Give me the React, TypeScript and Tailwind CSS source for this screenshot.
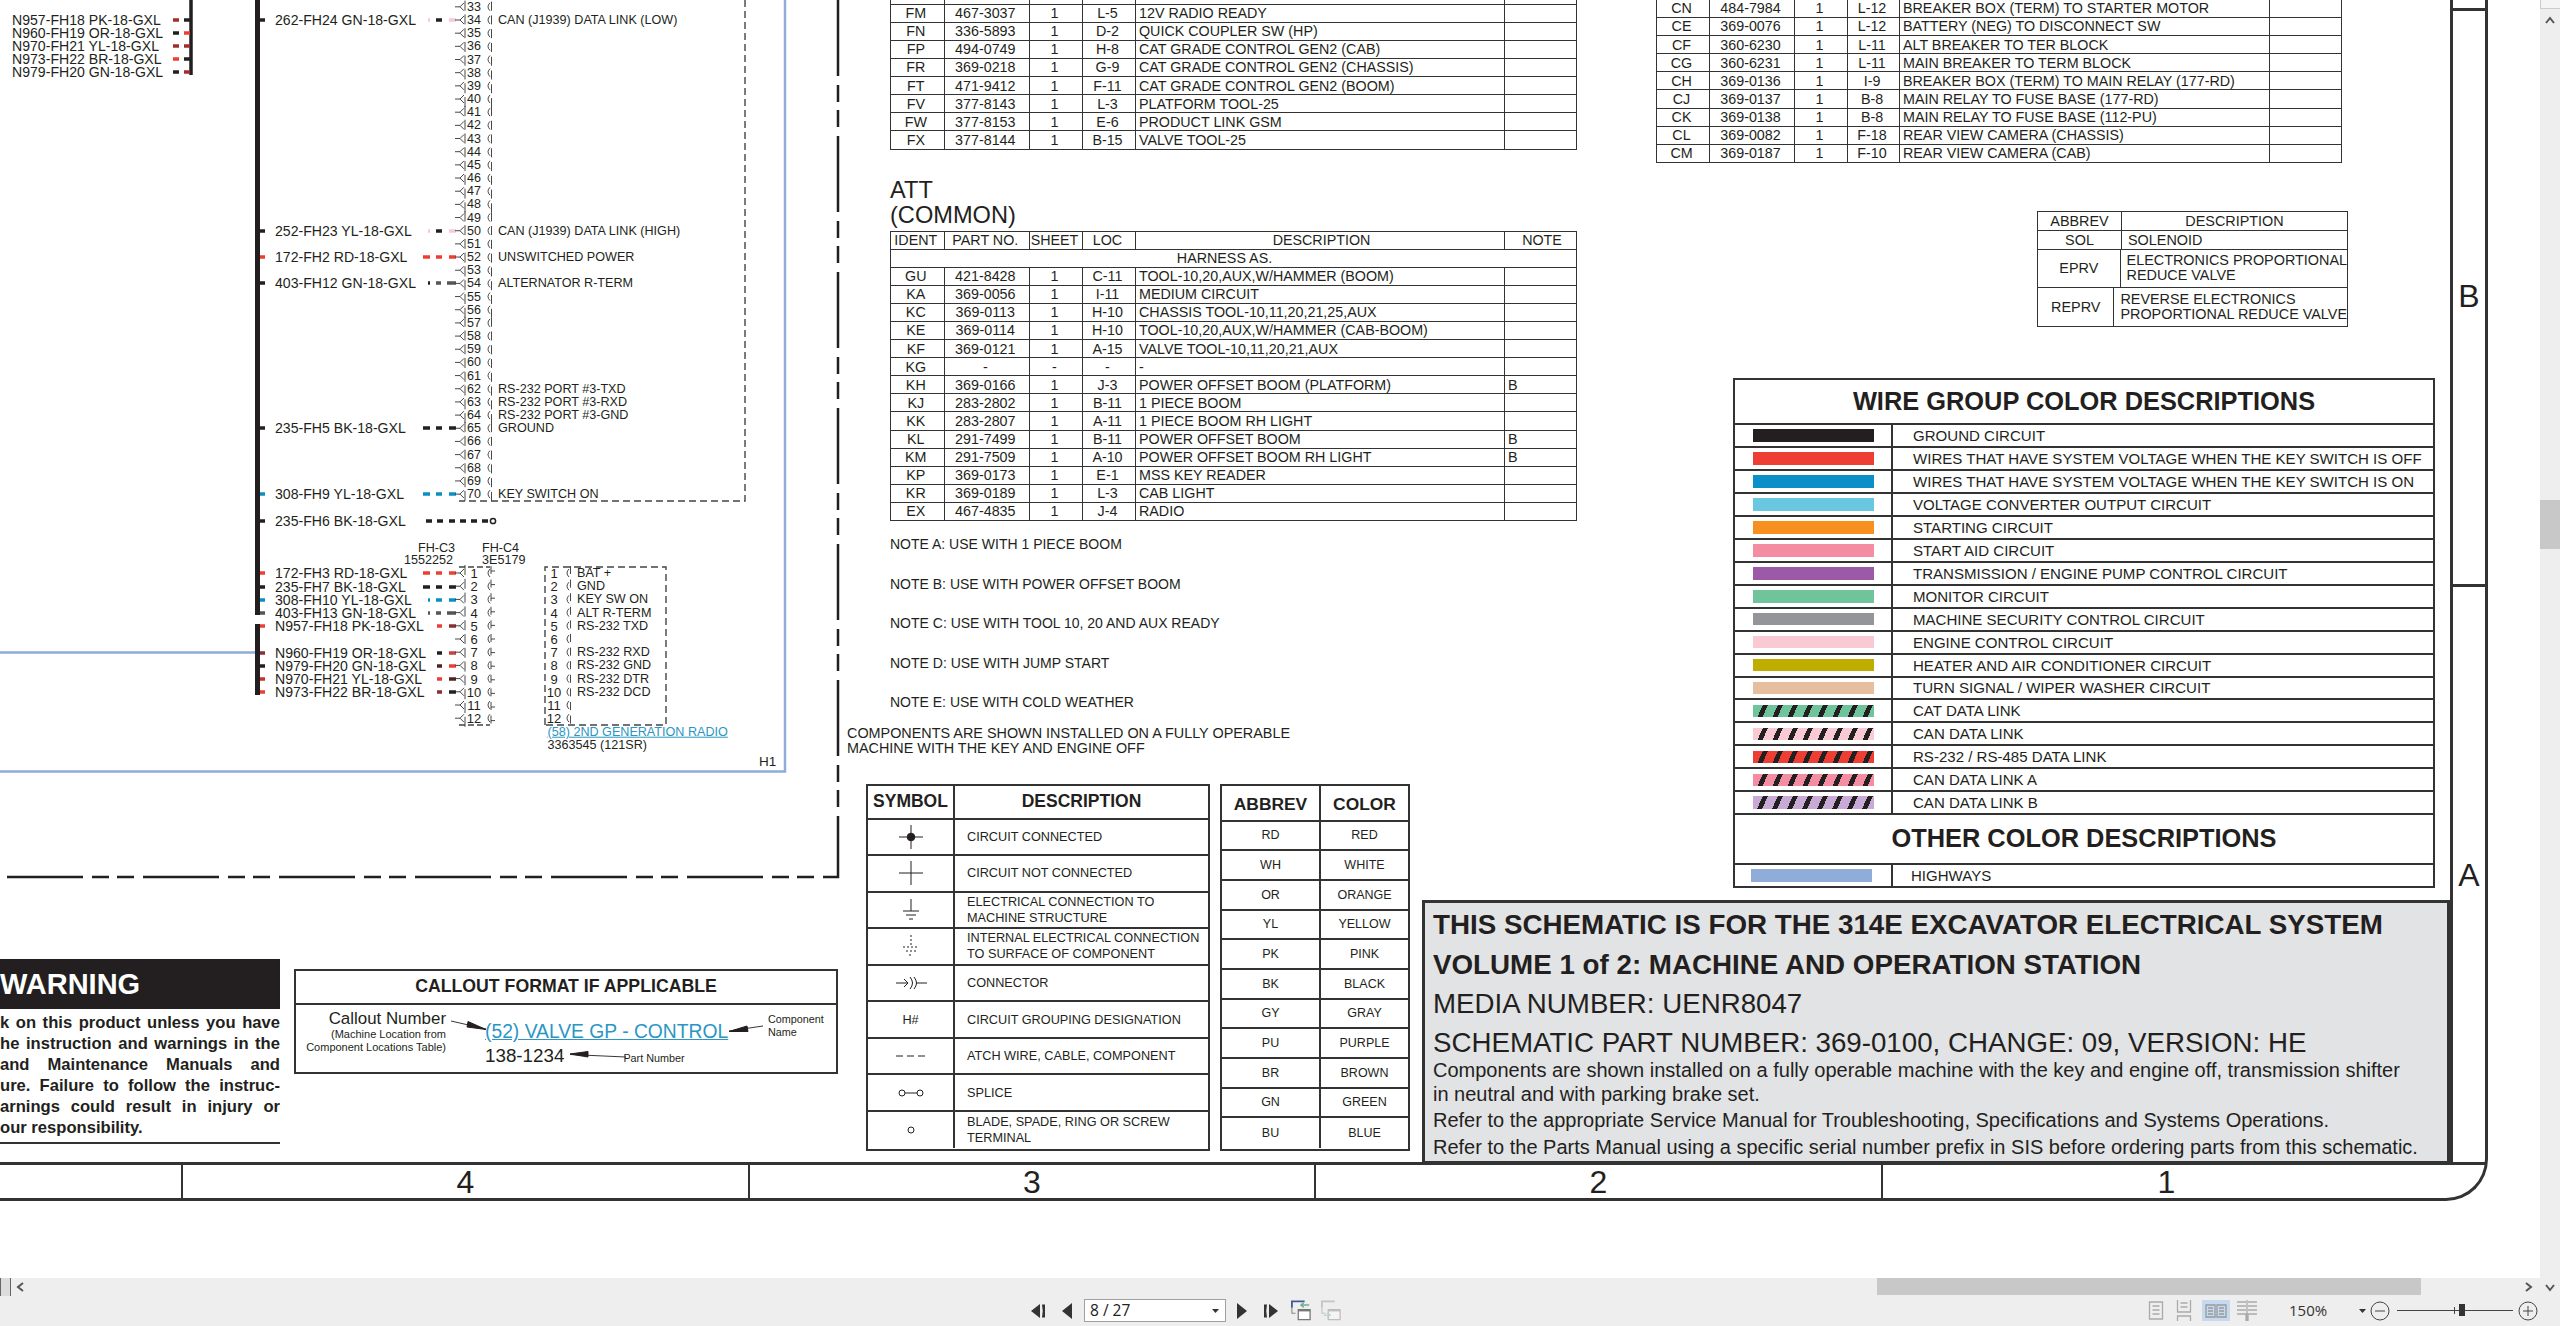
import React from "react";

const INK = "#231f20";
const RED = "#ee3e33";
const BLK = "#231f20";
const BLU = "#0a8fc4";
const PNK = "#f6c9d6";

type Dash = [number, number, string];
type Wire = { label: string; y: number; stub?: string; dashes: Dash[] };

const threeDash = (c: string): Dash[] => [[423, 430, c], [436, 442, c], [449, 456, c]];

const wires: Wire[] = [
  { label: "262-FH24 GN-18-GXL", y: 20, stub: BLK, dashes: [[428, 430, PNK], [436, 442, BLK], [449, 456, PNK]] },
  { label: "252-FH23 YL-18-GXL", y: 231, stub: BLK, dashes: [[428, 430, PNK], [436, 442, BLK], [449, 456, PNK]] },
  { label: "172-FH2 RD-18-GXL", y: 257, stub: RED, dashes: threeDash(RED) },
  { label: "403-FH12 GN-18-GXL", y: 283, stub: BLK, dashes: [[428, 430, BLK], [436, 441, "#555"], [447, 456, "#555"]] },
  { label: "235-FH5 BK-18-GXL", y: 428, stub: BLK, dashes: threeDash(BLK) },
  { label: "308-FH9 YL-18-GXL", y: 494, stub: BLU, dashes: threeDash(BLU) },
  { label: "235-FH6 BK-18-GXL", y: 521, stub: BLK, dashes: [[426, 432, BLK], [437, 443, BLK], [449, 455, BLK], [460, 466, BLK], [471, 477, BLK], [482, 488, BLK]] },
  { label: "172-FH3 RD-18-GXL", y: 573, stub: RED, dashes: threeDash(RED) },
  { label: "235-FH7 BK-18-GXL", y: 587, stub: BLK, dashes: threeDash(BLK) },
  { label: "308-FH10 YL-18-GXL", y: 600, stub: BLU, dashes: [[428, 430, BLU], [436, 442, BLU], [449, 456, BLU]] },
  { label: "403-FH13 GN-18-GXL", y: 613, stub: "#555", dashes: [[428, 430, "#555"], [436, 441, "#555"], [447, 456, "#555"]] },
  { label: "N957-FH18 PK-18-GXL", y: 626, stub: RED, dashes: [[437, 442, RED], [449, 456, "#8a3030"]] },
  { label: "N960-FH19 OR-18-GXL", y: 653, stub: "#8a3030", dashes: [[437, 442, BLK], [449, 456, "#c84040"]] },
  { label: "N979-FH20 GN-18-GXL", y: 666, stub: BLK, dashes: [[437, 442, "#552020"], [449, 456, RED]] },
  { label: "N970-FH21 YL-18-GXL", y: 679, stub: "#c83030", dashes: [[437, 442, RED], [449, 456, "#552020"]] },
  { label: "N973-FH22 BR-18-GXL", y: 692, stub: RED, dashes: [[437, 442, "#8a3030"], [449, 456, BLK]] },
];

const leftWires: { label: string; y: number; a: string; b: string }[] = [
  { label: "N957-FH18 PK-18-GXL", y: 20, a: "#a02c2c", b: BLK },
  { label: "N960-FH19 OR-18-GXL", y: 33, a: BLK, b: RED },
  { label: "N970-FH21 YL-18-GXL", y: 46, a: "#a02c2c", b: "#a02c2c" },
  { label: "N973-FH22 BR-18-GXL", y: 59, a: RED, b: BLK },
  { label: "N979-FH20 GN-18-GXL", y: 72, a: BLK, b: "#a02c2c" },
];

const pinY = (n: number) => 20 + (n - 34) * 13.17;
const pins = Array.from({ length: 38 }, (_, i) => i + 33);
const pinLabels: Record<number, string> = {
  34: "CAN (J1939) DATA LINK (LOW)",
  50: "CAN (J1939) DATA LINK (HIGH)",
  52: "UNSWITCHED POWER",
  54: "ALTERNATOR R-TERM",
  62: "RS-232 PORT #3-TXD",
  63: "RS-232 PORT #3-RXD",
  64: "RS-232 PORT #3-GND",
  65: "GROUND",
  70: "KEY SWITCH ON",
};

const c3Y = (n: number) => 573 + (n - 1) * 13.2;
const c3 = Array.from({ length: 12 }, (_, i) => i + 1);
const radioLabels = ["BAT +", "GND", "KEY SW ON", "ALT R-TERM", "RS-232 TXD", "", "RS-232 RXD", "RS-232 GND", "RS-232 DTR", "RS-232 DCD", "", ""];

function Tag({ x, y, className, children }: { x: number; y: number; className?: string; children: React.ReactNode }) {
  return (
    <div className={"absolute -translate-y-1/2 whitespace-nowrap leading-none " + (className ?? "text-[12.6px]")} style={{ left: x, top: y }}>
      {children}
    </div>
  );
}

function Diagram() {
  return (
    <div className="relative h-[959px] w-[847px] shrink-0">
      <svg className="absolute left-0 top-0" width="847" height="959" fill="none">
        <path d="M785 0V771.5H0" stroke="#8fadd8" strokeWidth="2.5" />
        <path d="M0 652.5H256" stroke="#8fadd8" strokeWidth="2.5" />
        <path d="M838 0V877H0" stroke="#231f20" strokeWidth="2.5" strokeDasharray="76 9 17 8 17 9" />
        <path d="M191 0V75" stroke={BLK} strokeWidth="3.5" />
        <path d="M257.5 0V615M257.5 624V695" stroke={BLK} strokeWidth="5" />
        <path d="M745 0V501H459" stroke="#444" strokeWidth="1.4" strokeDasharray="7 4" />
        <path d="M459 567H490M459 725H490" stroke="#444" strokeWidth="1.4" strokeDasharray="6 3" />
        <path d="M545 725V567H666V725H545" stroke="#444" strokeWidth="1.4" strokeDasharray="7 4" />
        {leftWires.map((w) => (
          <g key={w.label} strokeWidth="3.5">
            <path d={`M173 ${w.y}H179`} stroke={w.a} />
            <path d={`M184 ${w.y}H190`} stroke={w.b} />
          </g>
        ))}
        {wires.map((w) => (
          <g key={w.label} strokeWidth="3.5">
            <path d={`M260 ${w.y}H265`} stroke={w.stub} />
            {w.dashes.map((d, i) => (
              <path key={i} d={`M${d[0]} ${w.y}H${d[1]}`} stroke={d[2]} />
            ))}
          </g>
        ))}
        <circle cx="493" cy="521" r="2.6" stroke={BLK} strokeWidth="1.5" />
        {pins.map((n) => {
          const y = pinY(n);
          const o = ((n - 33) % 8) - 2;
          return (
            <g key={n} stroke="#333" strokeWidth="0.9">
              <path d={`M455 ${y}H460M464 ${y - 4}L460 ${y}L464 ${y + 4}M465 ${y - 5 + o * 0.6}V${y + 5 + o * 0.6}`} />
              <path d={`M490 ${y - 4}Q486 ${y} 490 ${y + 4}M491.5 ${y - 4 + o * 0.6}V${y + 5 + o * 0.6}`} />
            </g>
          );
        })}
        {c3.map((n) => {
          const y = c3Y(n);
          const o = n - 6;
          return (
            <g key={n} stroke="#333" strokeWidth="0.9">
              <path d={`M455 ${y}H460M464 ${y - 4}L460 ${y}L464 ${y + 4}M465 ${y - 5 + o * 0.6}V${y + 5 + o * 0.6}`} />
              <path d={`M490 ${y - 4}Q486 ${y} 490 ${y + 4}M491 ${y + o * 0.4 - 5}V${y + o * 0.4 + 3}M491 ${y + o * 0.4}H495`} />
              <path d={`M569 ${y - 4}Q565 ${y} 569 ${y + 4}M570.5 ${y - 5 + o * 0.4}V${y + 3 + o * 0.4}`} />
            </g>
          );
        })}
      </svg>

      {leftWires.map((w) => (
        <Tag key={w.label} x={12} y={w.y} className="text-[14.1px]">{w.label}</Tag>
      ))}
      {wires.map((w) => (
        <Tag key={w.label} x={275} y={w.y} className="text-[14.1px]">{w.label}</Tag>
      ))}
      {pins.map((n) => (
        <Tag key={n} x={467} y={pinY(n)} className="text-[12.5px]">{n}</Tag>
      ))}
      {pins.filter((n) => pinLabels[n]).map((n) => (
        <Tag key={n} x={498} y={pinY(n)}>{pinLabels[n]}</Tag>
      ))}
      <Tag x={418} y={548}>FH-C3</Tag>
      <Tag x={404} y={560}>1552252</Tag>
      <Tag x={482} y={548}>FH-C4</Tag>
      <Tag x={482} y={560}>3E5179</Tag>
      {c3.map((n) => (
        <React.Fragment key={n}>
          <div className="absolute w-[20px] -translate-y-1/2 text-center text-[13px] leading-none" style={{ left: 464, top: c3Y(n) }}>{n}</div>
          <div className="absolute w-[20px] -translate-y-1/2 text-center text-[13px] leading-none" style={{ left: 544, top: c3Y(n) }}>{n}</div>
          {radioLabels[n - 1] && <Tag x={577} y={c3Y(n)}>{radioLabels[n - 1]}</Tag>}
        </React.Fragment>
      ))}
      <Tag x={547.5} y={732} className="text-[12.6px] text-[#2a96c4] underline">(58) 2ND GENERATION RADIO</Tag>
      <Tag x={547.5} y={745}>3363545 (121SR)</Tag>
      <Tag x={759} y={762} className="text-[13.5px]">H1</Tag>
    </div>
  );
}

function Warning() {
  const lines = [
    "k on this product unless you have",
    "he instruction and warnings in the",
    "and Maintenance Manuals and",
    "ure. Failure to follow the instruc-",
    "arnings could result in injury or",
  ];
  return (
    <div className="h-[185px] w-[280px] shrink-0 overflow-hidden border-b-[2.5px] border-[#333]">
      <div className="flex h-[50px] items-center bg-[#231f20] text-[29px] font-bold leading-none text-white">WARNING</div>
      <div className="pt-[3px]">
        {lines.map((l) => (
          <div key={l} className="h-[21px] text-[16.6px] font-bold leading-[21px] [text-align-last:justify]">{l}</div>
        ))}
        <div className="h-[21px] text-[16.6px] font-bold leading-[21px]">our responsibility.</div>
      </div>
    </div>
  );
}

function Callout() {
  return (
    <div className="ml-[14px] mt-[10px] h-[105px] w-[544px] shrink-0 border-2 border-[#333]">
      <div className="flex h-[34px] items-center justify-center border-b-2 border-[#333] text-[17.7px] font-bold leading-none">CALLOUT FORMAT IF APPLICABLE</div>
      <div className="relative flex">
        <div className="w-[150px] shrink-0 pt-[5px] text-right">
          <div className="text-[16.9px] leading-[18px]">Callout Number</div>
          <div className="text-[11px] leading-[13px]">(Machine Location from</div>
          <div className="text-[11px] leading-[13px]">Component Locations Table)</div>
        </div>
        <div className="ml-[39px] w-[283px] shrink-0 pt-[16px]">
          <div className="text-[19.3px] leading-[22px] text-[#2a96c4] underline">(52) VALVE GP - CONTROL</div>
          <div className="mt-[1px] flex items-center">
            <span className="text-[18.8px] leading-[24px]">138-1234</span>
            <span className="ml-[59px] mt-[4px] text-[10.8px] leading-none">Part Number</span>
          </div>
        </div>
        <div className="pt-[8px] text-[10.8px] leading-[13px]">
          <div>Component</div>
          <div>Name</div>
        </div>
        <svg className="absolute left-0 top-0" width="540" height="68" fill={INK} stroke={INK}>
          <path d="M155 16L190 24" strokeWidth="0.9" />
          <path d="M190 24.5L172 16.5L171 22Z" />
          <path d="M467 21L433 26" strokeWidth="0.9" />
          <path d="M433 26.5L451 21L452 26.5Z" />
          <path d="M330 52L274 49.5" strokeWidth="0.9" />
          <path d="M274 49L292 46.5L292 52Z" />
        </svg>
      </div>
    </div>
  );
}

const midGrid = "grid-cols-[53.6px_85.4px_53px_53px_369px_1fr]";
const rightGrid = "grid-cols-[53px_85px_53px_52px_370px_1fr]";

function PartRow({ cells, grid, extra }: { cells: string[]; grid: string; extra?: string }) {
  return (
    <div className={"grid h-[18.1px] border-x-[1.5px] border-b-[1.5px] border-[#333] text-[14.3px] leading-none " + grid + " " + (extra ?? "")}>
      {cells.map((c, i) => (
        <div
          key={i}
          className={
            "flex items-center whitespace-nowrap " +
            (i < 5 ? "border-r-[1.5px] border-[#333] " : "") +
            (i < 4 ? "justify-center pr-[3px]" : "pl-[3px]")
          }
        >
          {c}
        </div>
      ))}
    </div>
  );
}

const topMid = [
  ["FL", "369-0201", "1", "G-10", "OVERLOAD WARNING", ""],
  ["FM", "467-3037", "1", "L-5", "12V RADIO READY", ""],
  ["FN", "336-5893", "1", "D-2", "QUICK COUPLER SW (HP)", ""],
  ["FP", "494-0749", "1", "H-8", "CAT GRADE CONTROL GEN2 (CAB)", ""],
  ["FR", "369-0218", "1", "G-9", "CAT GRADE CONTROL GEN2 (CHASSIS)", ""],
  ["FT", "471-9412", "1", "F-11", "CAT GRADE CONTROL GEN2 (BOOM)", ""],
  ["FV", "377-8143", "1", "L-3", "PLATFORM TOOL-25", ""],
  ["FW", "377-8153", "1", "E-6", "PRODUCT LINK GSM", ""],
  ["FX", "377-8144", "1", "B-15", "VALVE TOOL-25", ""],
];

const att = [
  ["GU", "421-8428", "1", "C-11", "TOOL-10,20,AUX,W/HAMMER (BOOM)", ""],
  ["KA", "369-0056", "1", "I-11", "MEDIUM CIRCUIT", ""],
  ["KC", "369-0113", "1", "H-10", "CHASSIS TOOL-10,11,20,21,25,AUX", ""],
  ["KE", "369-0114", "1", "H-10", "TOOL-10,20,AUX,W/HAMMER (CAB-BOOM)", ""],
  ["KF", "369-0121", "1", "A-15", "VALVE TOOL-10,11,20,21,AUX", ""],
  ["KG", "-", "-", "-", "-", ""],
  ["KH", "369-0166", "1", "J-3", "POWER OFFSET BOOM (PLATFORM)", "B"],
  ["KJ", "283-2802", "1", "B-11", "1 PIECE BOOM", ""],
  ["KK", "283-2807", "1", "A-11", "1 PIECE BOOM RH LIGHT", ""],
  ["KL", "291-7499", "1", "B-11", "POWER OFFSET BOOM", "B"],
  ["KM", "291-7509", "1", "A-10", "POWER OFFSET BOOM RH LIGHT", "B"],
  ["KP", "369-0173", "1", "E-1", "MSS KEY READER", ""],
  ["KR", "369-0189", "1", "L-3", "CAB LIGHT", ""],
  ["EX", "467-4835", "1", "J-4", "RADIO", ""],
];

const topRight = [
  ["CN", "484-7984", "1", "L-12", "BREAKER BOX (TERM) TO STARTER MOTOR", ""],
  ["CE", "369-0076", "1", "L-12", "BATTERY (NEG) TO DISCONNECT SW", ""],
  ["CF", "360-6230", "1", "L-11", "ALT BREAKER TO TER BLOCK", ""],
  ["CG", "360-6231", "1", "L-11", "MAIN BREAKER TO TERM BLOCK", ""],
  ["CH", "369-0136", "1", "I-9", "BREAKER BOX (TERM) TO MAIN RELAY (177-RD)", ""],
  ["CJ", "369-0137", "1", "B-8", "MAIN RELAY TO FUSE BASE (177-RD)", ""],
  ["CK", "369-0138", "1", "B-8", "MAIN RELAY TO FUSE BASE (112-PU)", ""],
  ["CL", "369-0082", "1", "F-18", "REAR VIEW CAMERA (CHASSIS)", ""],
  ["CM", "369-0187", "1", "F-10", "REAR VIEW CAMERA (CAB)", ""],
];

const S = ({ children }: { children: React.ReactNode }) => (
  <svg width="34" height="30" viewBox="0 0 34 30" fill="none" stroke={INK} strokeWidth="1">{children}</svg>
);

const symbols: { icon: React.ReactNode; text: string[] }[] = [
  { icon: <S><path d="M5 15H29M17 3V27" /><circle cx="17" cy="15" r="3.8" fill={INK} /></S>, text: ["CIRCUIT CONNECTED"] },
  { icon: <S><path d="M5 15H29M17 3V27" /></S>, text: ["CIRCUIT NOT CONNECTED"] },
  { icon: <S><path d="M17 4V16M9 16H25M12 20H22M15 24H19" /></S>, text: ["ELECTRICAL CONNECTION TO", "MACHINE STRUCTURE"] },
  { icon: <S><path d="M17 4V16M9 16H25M12 20H22M15 24H19" strokeDasharray="2 2" /></S>, text: ["INTERNAL ELECTRICAL CONNECTION", "TO SURFACE OF COMPONENT"] },
  { icon: <S><path d="M2 15H14M10 11L14 15L10 19M16 9Q21 15 16 21M20 9Q25 15 20 21M22 15H33" /></S>, text: ["CONNECTOR"] },
  { icon: <span className="text-[12.7px]">H#</span>, text: ["CIRCUIT GROUPING DESIGNATION"] },
  { icon: <S><path d="M2 15H32" strokeDasharray="7 4" /></S>, text: ["ATCH WIRE, CABLE, COMPONENT"] },
  { icon: <S><circle cx="8" cy="15" r="3" /><circle cx="26" cy="15" r="3" /><path d="M11 15H23" /></S>, text: ["SPLICE"] },
  { icon: <S><circle cx="17" cy="15" r="3" /></S>, text: ["BLADE, SPADE, RING OR SCREW", "TERMINAL"] },
];

const colors = [
  ["RD", "RED"], ["WH", "WHITE"], ["OR", "ORANGE"], ["YL", "YELLOW"], ["PK", "PINK"], ["BK", "BLACK"],
  ["GY", "GRAY"], ["PU", "PURPLE"], ["BR", "BROWN"], ["GN", "GREEN"], ["BU", "BLUE"],
];

function Legends() {
  return (
    <div className="ml-[19px] mt-[27.5px] flex gap-[10px]">
      <div className="h-[367px] w-[344px] border-2 border-[#333]">
        <div className="flex h-[34px] border-b-2 border-[#333] text-[17.5px] font-bold leading-none">
          <div className="flex w-[87px] items-center justify-center border-r-2 border-[#333]">SYMBOL</div>
          <div className="flex flex-1 items-center justify-center">DESCRIPTION</div>
        </div>
        {symbols.map((s, i) => (
          <div key={i} className={"flex h-[36.55px] text-[12.7px] leading-[16px] " + (i < 8 ? "border-b-2 border-[#333]" : "")}>
            <div className="flex w-[87px] items-center justify-center border-r-2 border-[#333]">{s.icon}</div>
            <div className="flex flex-1 flex-col justify-center pl-[12px] whitespace-nowrap">
              {s.text.map((t) => <div key={t}>{t}</div>)}
            </div>
          </div>
        ))}
      </div>
      <div className="h-[367px] w-[190px] border-2 border-[#333]">
        <div className="flex h-[36px] border-b-2 border-[#333] text-[17.4px] font-bold leading-none">
          <div className="flex w-[99px] items-center justify-center border-r-2 border-[#333] pt-[4px]">ABBREV</div>
          <div className="flex flex-1 items-center justify-center pt-[4px]">COLOR</div>
        </div>
        {colors.map(([a, c], i) => (
          <div key={a} className={"flex h-[29.7px] text-[12.5px] leading-none " + (i < 10 ? "border-b-2 border-[#333]" : "")}>
            <div className="flex w-[99px] items-center justify-center border-r-2 border-[#333]">{a}</div>
            <div className="flex flex-1 items-center justify-center">{c}</div>
          </div>
        ))}
      </div>
    </div>
  );
}

function Middle() {
  return (
    <div className="w-[575px] shrink-0">
      <div className="ml-[43px] -mt-[13.3px] w-[687px]">
        {topMid.map((r) => <PartRow key={r[0]} cells={r} grid={midGrid} />)}
      </div>
      <div className="ml-[43px] mt-[28px] text-[23.6px] leading-[25.5px]">
        <div>ATT</div>
        <div>(COMMON)</div>
      </div>
      <div className="ml-[43px] mt-[2px] w-[687px] border-t-[1.5px] border-[#333]">
        <PartRow cells={["IDENT", "PART NO.", "SHEET", "LOC", "DESCRIPTION", "NOTE"]} grid={midGrid} extra="[&>*:nth-child(5)]:justify-center [&>*:nth-child(6)]:justify-center" />
        <div className="flex h-[18.1px] items-center justify-center border-x-[1.5px] border-b-[1.5px] border-[#333] pr-[18px] text-[14.3px] leading-none">HARNESS AS.</div>
        {att.map((r) => <PartRow key={r[0]} cells={r} grid={midGrid} />)}
      </div>
      <div className="ml-[43px] mt-[4px] text-[14px] leading-[39.5px]">
        <div>NOTE A: USE WITH 1 PIECE BOOM</div>
        <div>NOTE B: USE WITH POWER OFFSET BOOM</div>
        <div>NOTE C: USE WITH TOOL 10, 20 AND AUX READY</div>
        <div>NOTE D: USE WITH JUMP START</div>
        <div>NOTE E: USE WITH COLD WEATHER</div>
      </div>
      <div className="mt-[3.5px] text-[14.4px] leading-[15px] whitespace-nowrap">
        <div>COMPONENTS ARE SHOWN INSTALLED ON A FULLY OPERABLE</div>
        <div>MACHINE WITH THE KEY AND ENGINE OFF</div>
      </div>
      <Legends />
    </div>
  );
}

const swatches: [string, string][] = [
  ["bg-[#231f20]", "GROUND CIRCUIT"],
  ["bg-[#ee3e33]", "WIRES THAT HAVE SYSTEM VOLTAGE WHEN THE KEY SWITCH IS OFF"],
  ["bg-[#0a8fc9]", "WIRES THAT HAVE SYSTEM VOLTAGE WHEN THE KEY SWITCH IS ON"],
  ["bg-[#6ac7e2]", "VOLTAGE CONVERTER OUTPUT CIRCUIT"],
  ["bg-[#f7901e]", "STARTING CIRCUIT"],
  ["bg-[#f48da2]", "START AID CIRCUIT"],
  ["bg-[#9b59a7]", "TRANSMISSION / ENGINE PUMP CONTROL CIRCUIT"],
  ["bg-[#6fc49b]", "MONITOR CIRCUIT"],
  ["bg-[#939598]", "MACHINE SECURITY CONTROL CIRCUIT"],
  ["bg-[#f9c9d4]", "ENGINE CONTROL CIRCUIT"],
  ["bg-[#bfad00]", "HEATER AND AIR CONDITIONER CIRCUIT"],
  ["bg-[#e5bf9f]", "TURN SIGNAL / WIPER WASHER CIRCUIT"],
  ["bg-[repeating-linear-gradient(115deg,#6fc49b_0,#6fc49b_9px,#231f20_9px,#231f20_13.6px)]", "CAT DATA LINK"],
  ["bg-[repeating-linear-gradient(115deg,#f9c9d4_0,#f9c9d4_9px,#231f20_9px,#231f20_13.6px)]", "CAN DATA LINK"],
  ["bg-[repeating-linear-gradient(115deg,#ee3e33_0,#ee3e33_9px,#231f20_9px,#231f20_13.6px)]", "RS-232 / RS-485 DATA LINK"],
  ["bg-[repeating-linear-gradient(115deg,#f48da2_0,#f48da2_9px,#231f20_9px,#231f20_13.6px)]", "CAN DATA LINK A"],
  ["bg-[repeating-linear-gradient(115deg,#c9a9d6_0,#c9a9d6_9px,#231f20_9px,#231f20_13.6px)]", "CAN DATA LINK B"],
];

function WireTable() {
  return (
    <div className="ml-[311px] mt-[51.4px] h-[509.5px] w-[702px] border-2 border-[#333] text-[15.05px] leading-none">
      <div className="flex h-[45px] items-center justify-center border-b-2 border-[#333] text-[25.4px] font-bold leading-none">WIRE GROUP COLOR DESCRIPTIONS</div>
      {swatches.map(([cls, t]) => (
        <div key={t} className="flex h-[22.94px] items-center border-b-2 border-[#333]">
          <div className="flex h-full w-[158px] items-center border-r-2 border-[#333] pl-[18px]">
            <div className={"h-[12.5px] w-[121px] " + cls} />
          </div>
          <div className="pl-[20px] whitespace-nowrap">{t}</div>
        </div>
      ))}
      <div className="flex h-[49.7px] items-center justify-center border-b-2 border-[#333] text-[25.4px] font-bold leading-none">OTHER COLOR DESCRIPTIONS</div>
      <div className="flex h-[21px] items-center">
        <div className="flex h-full w-[158px] items-center border-r-2 border-[#333] pl-[16px]">
          <div className="h-[12.5px] w-[121px] bg-[#8fadd8]" />
        </div>
        <div className="pl-[18px]">HIGHWAYS</div>
      </div>
    </div>
  );
}

function AbbrevTable() {
  return (
    <div className="ml-[615px] mt-[48px] w-[311px] border-[1.5px] border-[#333] text-[14.4px] leading-none">
      <div className="flex h-[19px] border-b-[1.5px] border-[#333]">
        <div className="flex w-[84px] items-center justify-center border-r-[1.5px] border-[#333]">ABBREV</div>
        <div className="flex flex-1 items-center justify-center">DESCRIPTION</div>
      </div>
      <div className="flex h-[19px] border-b-[1.5px] border-[#333]">
        <div className="flex w-[84px] items-center justify-center border-r-[1.5px] border-[#333]">SOL</div>
        <div className="flex flex-1 items-center pl-[6px]">SOLENOID</div>
      </div>
      <div className="flex h-[38px] border-b-[1.5px] border-[#333]">
        <div className="flex w-[84px] items-center justify-center border-r-[1.5px] border-[#333]">EPRV</div>
        <div className="flex flex-1 flex-col justify-center pl-[6px] leading-[15px] whitespace-nowrap">
          <div>ELECTRONICS PROPORTIONAL</div>
          <div>REDUCE VALVE</div>
        </div>
      </div>
      <div className="flex h-[38px]">
        <div className="flex w-[84px] items-center justify-center border-r-[1.5px] border-[#333]">REPRV</div>
        <div className="flex flex-1 flex-col justify-center pl-[6px] leading-[15px] whitespace-nowrap">
          <div>REVERSE ELECTRONICS</div>
          <div>PROPORTIONAL REDUCE VALVE</div>
        </div>
      </div>
    </div>
  );
}

function TitleBox() {
  return (
    <div className="mt-[12px] h-[264px] w-[1028px] border-[3px] border-[#333] bg-[#e2e3e5] pl-[8px] pt-[2.5px] whitespace-nowrap">
      <div className="text-[27.75px] font-bold leading-[39.3px]">THIS SCHEMATIC IS FOR THE 314E EXCAVATOR ELECTRICAL SYSTEM</div>
      <div className="text-[27.75px] font-bold leading-[39.3px]">VOLUME 1 of 2: MACHINE AND OPERATION STATION</div>
      <div className="text-[27.7px] leading-[39.3px]">MEDIA NUMBER: UENR8047</div>
      <div className="text-[27.7px] leading-[39.3px]">SCHEMATIC PART NUMBER: 369-0100, CHANGE: 09, VERSION: HE</div>
      <div className="-mt-[4.6px] text-[20px] leading-[24px]">Components are shown installed on a fully operable machine with the key and engine off, transmission shifter</div>
      <div className="text-[20px] leading-[24px]">in neutral and with parking brake set.</div>
      <div className="mt-[1px] text-[20px] leading-[26px]">Refer to the appropriate Service Manual for Troubleshooting, Specifications and Systems Operations.</div>
      <div className="mt-[1px] text-[20px] leading-[26px]">Refer to the Parts Manual using a specific serial number prefix in SIS before ordering parts from this schematic.</div>
    </div>
  );
}

function Right() {
  return (
    <div className="w-[1028px] shrink-0">
      <div className="ml-[234px] w-[686px]">
        {topRight.map((r) => <PartRow key={r[0]} cells={r} grid={rightGrid} />)}
      </div>
      <AbbrevTable />
      <WireTable />
      <TitleBox />
    </div>
  );
}

function ZoneColumn() {
  return (
    <div className="flex flex-1 flex-col border-l-[3px] border-[#333] text-[32px] leading-none">
      <div className="h-[11px] border-b-[3px] border-[#333]" />
      <div className="flex h-[576px] items-center justify-center border-b-[3px] border-[#333] pb-[4px]">B</div>
      <div className="flex flex-1 items-center justify-center">A</div>
    </div>
  );
}

function Zones() {
  return (
    <div className="flex h-[36px] border-t-[3px] border-[#333] text-[32px] leading-none">
      <div className="w-[183px] border-r-2 border-[#333]" />
      <div className="flex w-[567px] items-center justify-center border-r-2 border-[#333]">4</div>
      <div className="flex w-[566px] items-center justify-center border-r-2 border-[#333]">3</div>
      <div className="flex w-[567px] items-center justify-center border-r-2 border-[#333]">2</div>
      <div className="flex w-[567px] items-center justify-center">1</div>
    </div>
  );
}

const Chev = ({ d, className }: { d: string; className?: string }) => (
  <svg width="12" height="12" viewBox="0 0 12 12" fill="none" stroke="#555" strokeWidth="2" className={className}><path d={d} /></svg>
);

function PageIcon({ dim, mirror }: { dim?: boolean; mirror?: boolean }) {
  return (
    <svg width="20" height="21" viewBox="0 0 22 22" fill="none" className={dim ? "opacity-40" : ""}>
      <path d="M1 8V1H15" stroke={dim ? "#888" : "#3d5f93"} strokeWidth="2" />
      <path d="M1 8V14H5" stroke="#888" strokeWidth="1.2" />
      <path d="M8 10H21V21H8Z" fill="#fff" stroke="#777" strokeWidth="1.4" />
      <path d="M8 11H21" stroke="#777" strokeWidth="2" />
      {mirror ? (
        <path d="M3 16H9M7 13.5L10 16L7 18.5" stroke="#6fae8f" strokeWidth="1.4" />
      ) : (
        <path d="M20 5H12M14 2.5L11 5L14 7.5" stroke="#6fae8f" strokeWidth="1.6" />
      )}
    </svg>
  );
}

function StatusBar() {
  return (
    <div className="h-[48px] shrink-0 bg-[#eeeeee]">
      <div className="flex h-[17px] items-center">
        <div className="h-[18px] w-[11px] shrink-0 border-x border-[#666] bg-[#dcdcdc]" />
        <Chev d="M8 2L3 6L8 10" className="ml-[4px] shrink-0" />
        <div className="ml-[1850px] h-full w-[544px] shrink-0 bg-[#c8c8c8]" />
        <Chev d="M4 2L9 6L4 10" className="ml-[101px] shrink-0" />
        <Chev d="M2 4L6 9L10 4" className="ml-[10px] shrink-0" />
      </div>
      <div className="flex h-[31px] items-center pl-[1030px]">
        <svg width="16" height="16" viewBox="0 0 16 16" fill="#333"><path d="M10 1V15L1 8Z" /><path d="M12 1.5H15V14.5H12Q13.5 8 12 1.5Z" /></svg>
        <svg className="ml-[16px]" width="10" height="16" viewBox="0 0 10 16" fill="#333"><path d="M10 0V16L0 8Z" /></svg>
        <div className="ml-[12px] flex h-[23px] w-[142px] items-center justify-between border border-[#a0a0a0] bg-white pl-[5px] pr-[6px] font-['Open_Sans',sans-serif] text-[15.5px] leading-none text-[#222]">
          <span>8 / 27</span>
          <svg width="7" height="4" viewBox="0 0 7 4" fill="#333"><path d="M0 0H7L3.5 4Z" /></svg>
        </div>
        <svg className="ml-[11px]" width="10" height="16" viewBox="0 0 10 16" fill="#333"><path d="M0 0V16L10 8Z" /></svg>
        <svg className="ml-[16px]" width="16" height="16" viewBox="0 0 16 16" fill="#333"><path d="M6 1V15L15 8Z" /><path d="M4 1.5H1V14.5H4Q2.5 8 4 1.5Z" /></svg>
        <div className="ml-[12px]"><PageIcon /></div>
        <div className="ml-[10px]"><PageIcon dim mirror /></div>

        <svg className="ml-[807px]" width="16" height="21" viewBox="0 0 16 21" fill="none" stroke="#aaa" strokeWidth="1.3"><path d="M1.5 2H14.5V19H1.5ZM4.5 6H11.5M4.5 10H11.5M4.5 14H11.5" /></svg>
        <svg className="ml-[12px]" width="16" height="21" viewBox="0 0 16 21" fill="none" stroke="#aaa" strokeWidth="1.3"><path d="M1.5 0V12H14.5V0M4.5 3H11.5M4.5 7H11.5M1.5 21V16H14.5V21" /></svg>
        <div className="ml-[10px] flex h-[21px] w-[28px] items-center justify-center bg-[#c5d9f1]">
          <svg width="22" height="14" viewBox="0 0 22 14" fill="none" stroke="#999" strokeWidth="1.3"><path d="M1 1H10V13H1ZM12 1H21V13H12ZM3 4H8M3 7H8M3 10H8M14 4H19M14 7H19M14 10H19" /></svg>
        </div>
        <svg className="ml-[6px]" width="22" height="21" viewBox="0 0 22 21" fill="none" stroke="#aaa" strokeWidth="1.3"><path d="M1 2H10M1 6H10M1 10H10M12 2H21M12 6H21M12 10H21M1 14H10V21M12 21V14H21M11 0V21" /></svg>
        <span className="ml-[31px] w-[40px] font-['Open_Sans',sans-serif] text-[15px] leading-none text-[#333]">150%</span>
        <svg className="ml-[30px]" width="7" height="4" viewBox="0 0 7 4" fill="#333"><path d="M0 0H7L3.5 4Z" /></svg>
        <svg className="ml-[4px]" width="20" height="20" viewBox="0 0 20 20" fill="none" stroke="#444" strokeWidth="1"><circle cx="10" cy="10" r="9" /><path d="M5 10H15" /></svg>
        <div className="relative ml-[7px] h-[1px] w-[116px] bg-[#444]">
          <div className="absolute left-[57px] top-[-3px] h-[7px] w-[1px] bg-[#444]" />
          <div className="absolute left-[62px] top-[-6px] h-[12px] w-[6px] bg-[#333]" />
        </div>
        <svg className="ml-[5px]" width="20" height="20" viewBox="0 0 20 20" fill="none" stroke="#444" strokeWidth="1"><circle cx="10" cy="10" r="9" /><path d="M5 10H15M10 5V15" /></svg>
      </div>
    </div>
  );
}

function VScroll() {
  return (
    <div className="flex w-[20px] shrink-0 flex-col items-center bg-[#eeeeee]">
      <div className="h-[9px] w-full border-b border-l border-[#ccc] bg-[#f4f4f4]" />
      <Chev d="M2 8L6 3L10 8" className="mt-[6px]" />
      <div className="mt-[473px] h-[49px] w-full bg-[#c8c8c8]" />
    </div>
  );
}

export default function App() {
  return (
    <div className="flex h-[1326px] w-[2560px] flex-col overflow-hidden bg-white font-['Liberation_Sans',Arial,sans-serif] text-[#231f20]">
      <div className="flex min-h-0 flex-1">
        <div className="min-w-0 flex-1 overflow-hidden">
          <div className="h-[1201px] w-[2488px] rounded-br-[42px] border-b-[3px] border-r-[3px] border-[#333]">
            <div className="flex h-[1162px]">
              <div className="flex w-[847px] shrink-0 flex-col">
                <Diagram />
                <div className="flex">
                  <Warning />
                  <Callout />
                </div>
              </div>
              <Middle />
              <Right />
              <ZoneColumn />
            </div>
            <Zones />
          </div>
        </div>
        <VScroll />
      </div>
      <StatusBar />
    </div>
  );
}
